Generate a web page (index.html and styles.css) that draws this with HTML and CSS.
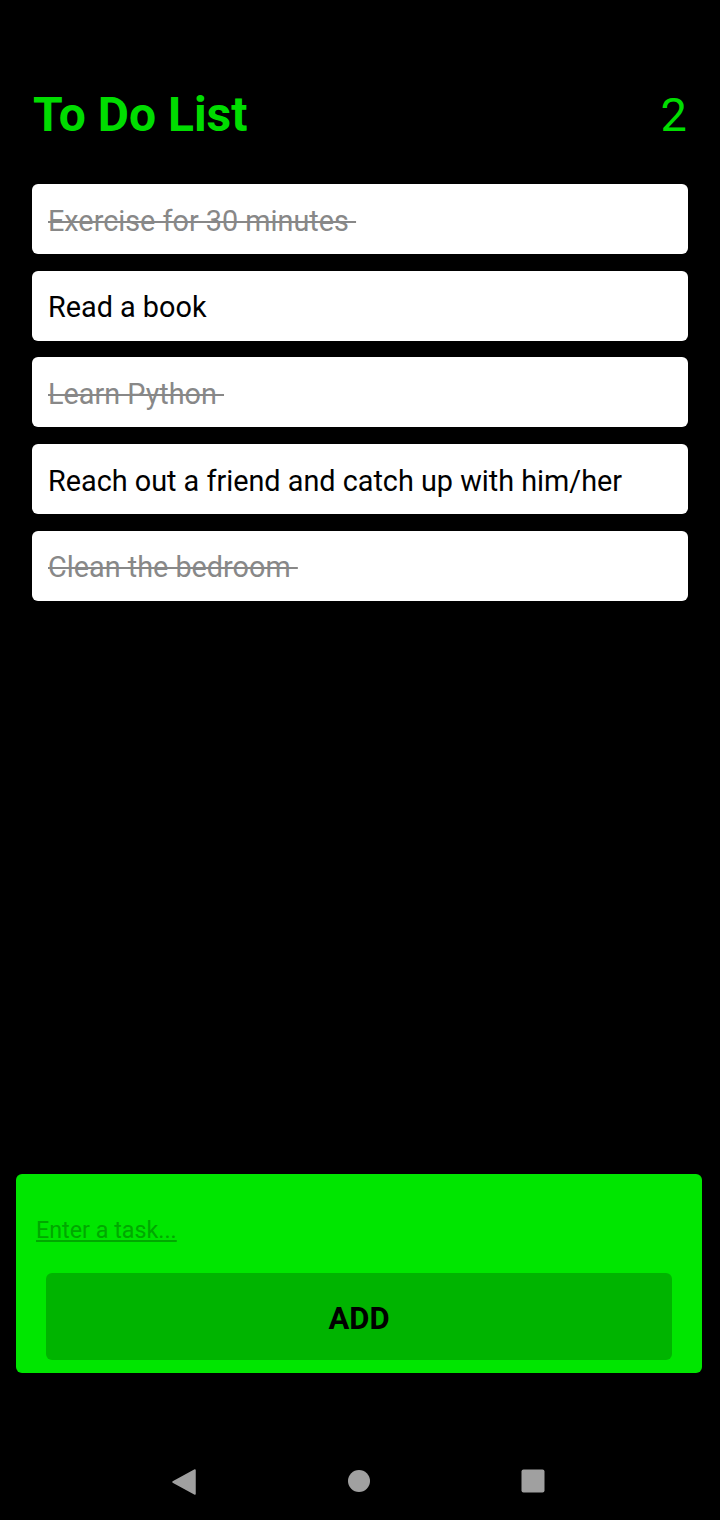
FILE: index.html
```html
<!DOCTYPE html>
<html>
<head>
<meta charset="utf-8">
<link rel="stylesheet" href="styles.css">
</head>
<body>
<div class="screen">
  <header class="header">
    <h1 class="title">To Do List</h1>
    <span class="count">2</span>
  </header>
  <ul class="list">
    <li class="item done"><span>Exercise for 30 minutes&nbsp;</span></li>
    <li class="item"><span>Read a book</span></li>
    <li class="item done"><span>Learn Python&nbsp;</span></li>
    <li class="item"><span>Reach out a friend and catch up with him/her</span></li>
    <li class="item done"><span>Clean the bedroom&nbsp;</span></li>
  </ul>
  <div class="spacer"></div>
  <form class="panel">
    <input class="task-input" type="text" placeholder="Enter a task...">
    <button class="add-btn" type="button">ADD</button>
  </form>
  <nav class="navbar">
    <svg class="nav-icon" width="24" height="26" viewBox="0 0 24 26"><path d="M23 1 L23 25 L1 13 Z" fill="#a0a0a0" stroke="#a0a0a0" stroke-width="1.5" stroke-linejoin="round"/></svg>
    <svg class="nav-icon" width="24" height="24" viewBox="0 0 24 24"><circle cx="12" cy="12" r="11" fill="#a0a0a0"/></svg>
    <svg class="nav-icon" width="24" height="24" viewBox="0 0 24 24"><rect x="0.5" y="0.5" width="23" height="23" rx="2" fill="#a0a0a0"/></svg>
  </nav>
</div>
</body>
</html>
```
FILE: styles.css
```css
* { box-sizing: border-box; }
html, body {
  margin: 0;
  padding: 0;
  background: #000;
}
body {
  font-family: Roboto, "Liberation Sans", sans-serif;
}
.screen {
  width: 720px;
  height: 1520px;
  display: flex;
  flex-direction: column;
}
.header {
  display: flex;
  justify-content: space-between;
  align-items: flex-start;
  padding: 88px 33px 0 33px;
  height: 184px;
}
.title {
  margin: 0;
  font-size: 48px;
  font-weight: 700;
  color: #00dd00;
  line-height: 54px;
}
.count {
  font-size: 47px;
  font-weight: 400;
  color: #00dd00;
  line-height: 54px;
}
.list {
  list-style: none;
  margin: 0;
  padding: 0 32px;
  display: flex;
  flex-direction: column;
  gap: 16.7px;
}
.item {
  background: #fff;
  border-radius: 6px;
  height: 70px;
  display: flex;
  align-items: center;
  padding: 3px 16px 0 16px;
  font-size: 28.8px;
  color: #000;
}
.item.done span {
  color: #888;
  text-decoration: line-through;
  text-decoration-thickness: 2px;
}
.spacer {
  flex: 1;
}
.panel {
  margin: 0 18px 0 16px;
  height: 199px;
  background: #00e600;
  border-radius: 6px;
  display: flex;
  flex-direction: column;
  padding: 40px 30px 13px 20px;
}
.task-input {
  background: transparent;
  border: none;
  outline: none;
  font-family: Roboto, "Liberation Sans", sans-serif;
  font-size: 23.3px;
  padding: 0;
  height: 32px;
  width: 100%;
}
.task-input::placeholder {
  color: #00a800;
  text-decoration: underline;
}
.add-btn {
  margin: 27px 0 0 10px;
  height: 87px;
  border: none;
  border-radius: 6px;
  background: #00b400;
  font-family: Roboto, "Liberation Sans", sans-serif;
  font-size: 31px;
  font-weight: 700;
  color: #000;
  padding: 4px 0 0 0;
}
.navbar {
  height: 147px;
  display: flex;
  justify-content: space-between;
  align-items: flex-start;
  padding: 96px 175px 0 172px;
}
.nav-icon {
  display: block;
}
```
